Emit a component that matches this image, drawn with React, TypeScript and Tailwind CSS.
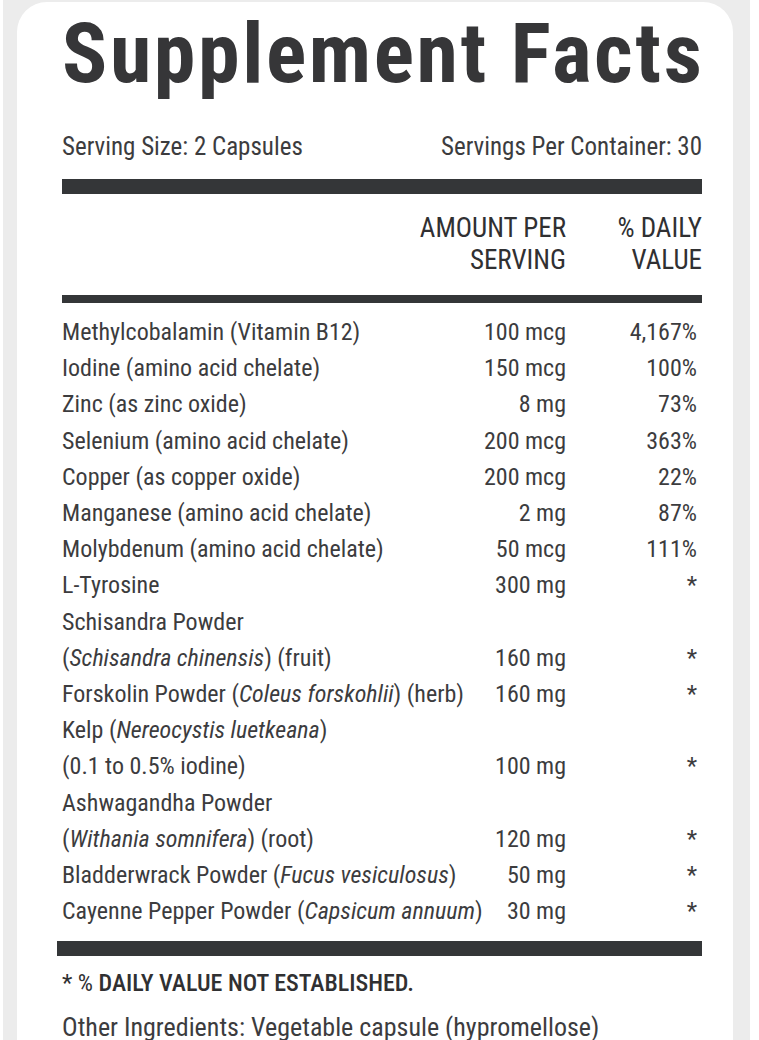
import type { ReactNode } from "react";

type Row = { name: ReactNode; amount: string; dv: string };

const rows: Row[] = [
  { name: "Methylcobalamin (Vitamin B12)", amount: "100 mcg", dv: "4,167%" },
  { name: "Iodine (amino acid chelate)", amount: "150 mcg", dv: "100%" },
  { name: "Zinc (as zinc oxide)", amount: "8 mg", dv: "73%" },
  { name: "Selenium (amino acid chelate)", amount: "200 mcg", dv: "363%" },
  { name: "Copper (as copper oxide)", amount: "200 mcg", dv: "22%" },
  { name: "Manganese (amino acid chelate)", amount: "2 mg", dv: "87%" },
  { name: "Molybdenum (amino acid chelate)", amount: "50 mcg", dv: "111%" },
  { name: "L-Tyrosine", amount: "300 mg", dv: "*" },
  {
    name: (
      <>
        Schisandra Powder
        <br />(<i>Schisandra chinensis</i>) (fruit)
      </>
    ),
    amount: "160 mg",
    dv: "*",
  },
  {
    name: (
      <>
        Forskolin Powder (<i>Coleus forskohlii</i>) (herb)
      </>
    ),
    amount: "160 mg",
    dv: "*",
  },
  {
    name: (
      <>
        Kelp (<i>Nereocystis luetkeana</i>)
        <br />
        (0.1 to 0.5% iodine)
      </>
    ),
    amount: "100 mg",
    dv: "*",
  },
  {
    name: (
      <>
        Ashwagandha Powder
        <br />(<i>Withania somnifera</i>) (root)
      </>
    ),
    amount: "120 mg",
    dv: "*",
  },
  {
    name: (
      <>
        Bladderwrack Powder (<i>Fucus vesiculosus</i>)
      </>
    ),
    amount: "50 mg",
    dv: "*",
  },
  {
    name: (
      <>
        Cayenne Pepper Powder (<i>Capsicum annuum</i>)
      </>
    ),
    amount: "30 mg",
    dv: "*",
  },
];

const font = {
  fontFamily:
    '"Roboto Condensed", "DejaVu Sans Condensed", "Liberation Sans Narrow", Roboto, sans-serif',
  fontStretch: "condensed",
};

export default function App() {
  return (
    <div className="min-h-[1040px] bg-white pl-[3px] pr-[9px]">
      <div className="min-h-[1040px] bg-[#ececec] pl-[14px] pr-[17px] pt-[2px]">
        <div
          style={font}
          className="min-h-[1038px] rounded-t-[30px] bg-white pl-[45px] pr-[31px] text-[#3c3c3e]"
        >
          <h1 className="whitespace-nowrap pt-[4px] text-[84px] font-bold leading-[96px] tracking-[2.6px] text-[#363638]">
            Supplement Facts
          </h1>

          <div className="mt-[29px] flex justify-between text-[25px] leading-[32px]">
            <span>Serving Size: 2 Capsules</span>
            <span>Servings Per Container: 30</span>
          </div>

          <div className="mt-[16px] h-[15px] bg-[#343638]" />

          <div className="grid grid-cols-[minmax(0,1fr)_160px_136px] pt-[18px] pb-[19px] text-[27px] uppercase leading-[32px] text-[#303032]">
            <span />
            <span className="text-right">
              Amount per
              <br />
              Serving
            </span>
            <span className="text-right">
              % Daily
              <br />
              Value
            </span>
          </div>

          <div className="h-[8px] bg-[#343638]" />

          <div className="pt-[11px] pb-[12px] text-[24px] leading-[36.2px]">
            {rows.map((r, i) => (
              <div key={i} className="grid grid-cols-[minmax(0,1fr)_100px_136px] items-end">
                <span className="whitespace-nowrap">{r.name}</span>
                <span className="text-right">{r.amount}</span>
                <span className="pr-[5px] text-right">{r.dv}</span>
              </div>
            ))}
          </div>

          <div className="-ml-[5px] h-[15px] bg-[#343638]" />

          <p className="mt-[11px] text-[24px] font-medium uppercase leading-[32px] text-[#303032]">
            <span className="font-normal">* % </span>Daily Value Not Established.
          </p>
          <p className="mt-[12px] text-[26px] leading-[32px]">
            Other Ingredients: Vegetable capsule (hypromellose)
          </p>
        </div>
      </div>
    </div>
  );
}
